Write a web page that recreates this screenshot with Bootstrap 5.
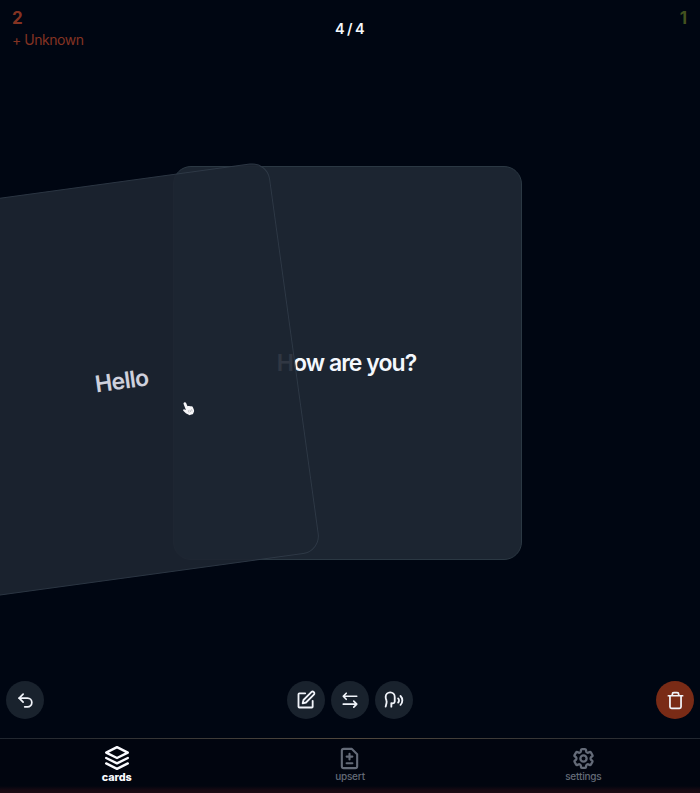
<!DOCTYPE html>
<html lang="en">
<head>
<meta charset="utf-8">
<meta name="viewport" content="width=device-width, initial-scale=1">
<title>Cards</title>
<link href="https://cdn.jsdelivr.net/npm/bootstrap@5.3.0/dist/css/bootstrap.min.css" rel="stylesheet">
<style>
body{background:#000612;color:#f4f8fd;font-family:Inter,"Liberation Sans",sans-serif;height:793px}
.top-row{height:60px;padding:7px 13px 0 12px}
.count{font-size:17px;font-weight:700;line-height:22px}
.unknown{color:#843322}
.unknown-label{font-size:14px;line-height:21px;letter-spacing:-.47px}
.known{color:#43521f}
.progress-text{font-size:14.5px;font-weight:600;line-height:20px;padding-top:12px;letter-spacing:-.65px}
.deck{height:606px;padding:106px 0 0 173px}
.flash{width:349px;height:394px;border:1px solid #2b3843;border-radius:18px;background:#1c2531;font-size:23px;font-weight:600;letter-spacing:-.95px}
.flash-back{padding-right:2px;padding-top:1px}
.flash-front{left:0;top:0;background:#1d2531;border-color:#303b48;color:#e4e6f2;opacity:.91;transform:translate(-226px,17px) rotate(-7.8deg);letter-spacing:-.7px;padding-top:3px}
.pointer-hand{left:182px;top:401px}
.tools{height:72px;padding:15px 6px 0}
.tool{width:38px;height:38px;background:#19222d;color:#f1f4fa}
.tool-delete{background:#792b16}
.tabs{height:55px;border-top:1px solid #272c34;border-image:linear-gradient(90deg,#20262f,#51483d 50%,#20262f) 1;background:linear-gradient(#01050f 0,#01050f 47px,#160912 51px,#1b0b13 100%)}
.tab{width:33.3333%;color:#646b78;font-size:10px;line-height:12px;padding-top:8px;font-weight:500;letter-spacing:-.2px;text-decoration:none}
.tab-icon{height:22px;margin-bottom:1px}
.tab-on{color:#fafbff;font-weight:800;font-size:10.8px;letter-spacing:-.1px}
.tab-on .tab-icon{margin-bottom:3px}
svg.line{fill:none;stroke:currentColor;stroke-width:2.200;stroke-linecap:round;stroke-linejoin:round}
</style>
<script src="https://cdn.jsdelivr.net/npm/bootstrap@5.3.0/dist/js/bootstrap.bundle.min.js"></script>
</head>
<body class="d-flex flex-column overflow-hidden position-relative">
<header class="top-row row g-0 flex-shrink-0">
  <div class="col unknown"><div class="count">2</div><div class="unknown-label">+ Unknown</div></div>
  <div class="col text-center progress-text">4 / 4</div>
  <div class="col text-end known count">1</div>
</header>
<main class="deck flex-shrink-0">
  <div class="position-relative d-inline-block">
    <div class="flash flash-back d-flex align-items-center justify-content-center">How are you?</div>
    <div class="flash flash-front position-absolute d-flex align-items-center justify-content-center">Hello</div>
  </div>
</main>
<svg class="pointer-hand position-absolute" width="14" height="15" viewBox="0 0 14 15"><path d="M2.200 1.400c.9-.5 1.600 0 1.900.7l1.400 3.200c.5-.6 1.300-.5 1.700 0 .5-.6 1.400-.4 1.800.2.800-.4 1.600 0 1.900.700l1 2.600c.5 1.200.1 2.500-.8 3.500l.2.700-4.300 1.300-.5-.8C4.700 13.100 3 11.500 1.300 9.700c-.6-.8.200-1.700 1.200-1.300l1.400.7L1.600 3C1.300 2.300 1.600 1.700 2.200 1.400z" fill="#f6f6f8"/><path d="M6.300 9.300l.8 2.200M7.900 8.800l.8 2.200M9.500 8.300l.7 2" fill="none" stroke="#9599a0" stroke-width=".6"/></svg>
<section class="tools d-flex justify-content-between flex-shrink-0 position-relative">
  <button class="tool btn border-0 rounded-circle p-0 d-flex align-items-center justify-content-center" aria-label="Undo"><svg class="line" width="19" height="19" viewBox="0 0 24 24"><path d="M9 14 4 9l5-5"/><path d="M4 9h10.500a5.500 5.500 0 0 1 0 11H11"/></svg></button>
  <div class="d-flex" style="gap:6px">
    <button class="tool btn border-0 rounded-circle p-0 d-flex align-items-center justify-content-center" aria-label="Edit"><svg class="line" width="20" height="20" viewBox="0 0 24 24"><path d="M11 4H4a1 1 0 0 0-1 1v15a1 1 0 0 0 1 1h15a1 1 0 0 0 1-1v-7"/><path d="M18.400 2.600a2.100 2.100 0 0 1 3 3L12 15l-4 1 1-4z"/></svg></button>
    <button class="tool btn border-0 rounded-circle p-0 d-flex align-items-center justify-content-center" aria-label="Swap"><svg class="line" width="18" height="18" viewBox="0 0 24 24"><path d="M21 7H3M7 3 3 7l4 4M3 17.500h18M17 13.500l4 4-4 4"/></svg></button>
    <button class="tool btn border-0 rounded-circle p-0 d-flex align-items-center justify-content-center" aria-label="Speak"><svg class="line" width="20" height="20" viewBox="0 0 24 24"><path d="M8.800 20v-4.100l1.900.2a2.300 2.300 0 0 0 2.164-2.100V8.300A5.370 5.370 0 0 0 2 8.250c0 2.800.656 3.054 1 4.550a5.770 5.770 0 0 1 .029 2.758L2 20"/><path d="M19.800 17.800a7.500 7.500 0 0 0 .003-10.603"/><path d="M17 15a3.500 3.500 0 0 0-.025-4.975"/></svg></button>
  </div>
  <button class="tool tool-delete btn border-0 rounded-circle p-0 d-flex align-items-center justify-content-center" aria-label="Delete"><svg class="line" width="19" height="19" viewBox="0 0 24 24"><path d="M3 6h18M19 6v14a2 2 0 0 1-2 2H7a2 2 0 0 1-2-2V6M8 6V4a2 2 0 0 1 2-2h4a2 2 0 0 1 2 2v2"/></svg></button>
</section>
<nav class="tabs d-flex flex-shrink-0">
  <a class="tab tab-on d-flex flex-column align-items-center"><span class="tab-icon d-flex align-items-center"><svg class="line" width="26" height="26" viewBox="0 0 24 24"><path d="M12 2 2 7l10 5 10-5z"/><path d="m2 12 10 5 10-5M2 17l10 5 10-5"/></svg></span>cards</a>
  <a class="tab d-flex flex-column align-items-center"><span class="tab-icon d-flex align-items-center"><svg class="line" width="23" height="23" viewBox="0 0 24 24"><path d="M14.500 2H6a2 2 0 0 0-2 2v16a2 2 0 0 0 2 2h12a2 2 0 0 0 2-2V7.500z"/><path d="M12 13V7M9 10h6M9 17h6"/></svg></span>upsert</a>
  <a class="tab d-flex flex-column align-items-center"><span class="tab-icon d-flex align-items-center"><svg class="line" width="25" height="25" viewBox="0 0 24 24"><path d="M9.600 3.900c.1-.5.500-.9 1.100-.9h2.600c.5 0 1 .4 1.100.9l.2 1.300c.1.400.3.700.6.900l.3.200c.3.200.7.200 1.100.1l1.200-.5c.5-.2 1.100 0 1.400.5l1.300 2.200c.3.500.2 1.100-.3 1.400l-1 .8c-.3.300-.4.600-.4 1v.4c0 .4.100.7.400 1l1 .8c.4.400.5 1 .3 1.400l-1.300 2.200c-.3.500-.9.700-1.400.5l-1.200-.5c-.4-.1-.8-.1-1.100.1l-.3.200c-.3.200-.5.500-.6.900l-.2 1.300c-.1.500-.6.900-1.100.9h-2.600c-.6 0-1-.4-1.100-.9l-.2-1.300c-.1-.4-.3-.7-.6-.9l-.3-.2c-.3-.2-.7-.2-1.100-.1l-1.200.5c-.5.2-1.100 0-1.400-.5l-1.300-2.200c-.3-.5-.2-1.100.3-1.400l1-.8c.3-.3.400-.6.400-1v-.4c0-.4-.1-.7-.4-1l-1-.8c-.5-.3-.6-.9-.3-1.400l1.300-2.200c.3-.5.900-.7 1.400-.5l1.200.5c.4.100.8.100 1.100-.1l.3-.2c.3-.2.500-.5.600-.9z"/><circle cx="12" cy="12" r="3"/></svg></span>settings</a>
</nav>
</body>
</html>
